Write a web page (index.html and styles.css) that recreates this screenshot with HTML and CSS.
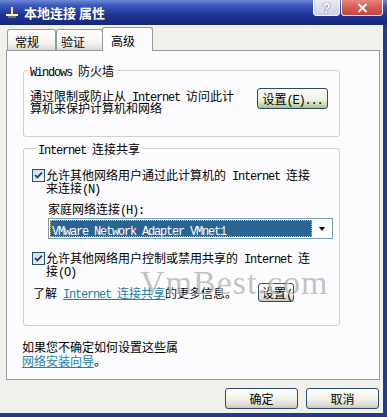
FILE: index.html
```html
<!DOCTYPE html>
<html lang="zh-CN">
<head>
  <meta charset="UTF-8">
  <title>本地连接 属性</title>
  <link rel="stylesheet" href="styles.css">
</head>
<body>
  <div class="window">
    <div class="titlebar">
      <svg class="app-icon" width="14" height="12" viewBox="0 0 14 12">
        <path d="M7 1v7" stroke="#ffe680" stroke-width="2"/>
        <path d="M1 9h12" stroke="#fff6c0" stroke-width="2"/>
        <path d="M3 11h8" stroke="#c9a640" stroke-width="1"/>
      </svg>
      <span class="title">本地连接 属性</span>
      <div class="caption-btns">
        <span class="cap help">?</span>
        <span class="cap close">
          <svg width="11" height="10" viewBox="0 0 11 10"><path d="M1.5 1l8 8M9.5 1l-8 8" stroke="#fff" stroke-width="2"/></svg>
        </span>
      </div>
    </div>

    <div class="client">
      <div class="tabs">
        <div class="tab">常规</div>
        <div class="tab">验证</div>
        <div class="tab active">高级</div>
      </div>

      <div class="panel">
        <fieldset class="group firewall">
          <legend><span class="en">Windows </span>防火墙</legend>
          <div class="row">
            <p class="desc">通过限制或防止从<span class="en"> Internet </span>访问此计<br>算机来保护计算机和网络</p>
            <button class="btn btn-green">设置<span class="en">(E)...</span></button>
          </div>
        </fieldset>

        <fieldset class="group sharing">
          <legend><span class="en">Internet </span>连接共享</legend>
          <div class="check">
            <span class="box"><svg width="11" height="11" viewBox="0 0 11 11"><path d="M2 5l2.3 2.4L9 2.6" fill="none" stroke="#23358c" stroke-width="1.8"/></svg></span>
            <span>允许其他网络用户通过此计算机的<span class="en"> Internet </span>连接<br>来连接<span class="en">(N)</span></span>
          </div>
          <div class="indent">
            <div class="field-label">家庭网络连接<span class="en">(H):</span></div>
            <div class="combo">
              <span class="combo-value"><span class="en">VMware Network Adapter VMnet1</span></span>
              <span class="combo-arrow"></span>
            </div>
          </div>
          <div class="check check-2">
            <span class="box"><svg width="11" height="11" viewBox="0 0 11 11"><path d="M2 5l2.3 2.4L9 2.6" fill="none" stroke="#23358c" stroke-width="1.8"/></svg></span>
            <span>允许其他网络用户控制或禁用共享的<span class="en"> Internet </span>连<br>接<span class="en">(O)</span></span>
          </div>
          <div class="more">
            <span>了解<span class="en"> </span><a href="#"><span class="en">Internet </span>连接共享</a>的更多信息。</span>
            <button class="btn btn-cut">设置<span class="en">(</span></button>
          </div>
        </fieldset>

        <p class="hint">如果您不确定如何设置这些属<br><a href="#">网络安装向导</a>。</p>
      </div>

      <div class="footer">
        <button class="btn">确定</button>
        <button class="btn">取消</button>
      </div>
    </div>

    <div class="watermark">VmBest.com</div>
  </div>
</body>
</html>
```

FILE: styles.css
```css
* {
  box-sizing: border-box;
}
body {
  margin: 0;
  font-family: "Noto Sans CJK SC", sans-serif;
  font-size: 12px;
  line-height: 12px;
  color: #000;
  background: #fff;
}
.en {
  font-family: "Liberation Mono", monospace;
  letter-spacing: -1.2px;
  line-height: 8px;
}
.window {
  position: relative;
  width: 387px;
  height: 417px;
  overflow: hidden;
  background: #f1f0ea;
}

/* title bar */
.titlebar {
  height: 25px;
  display: flex;
  align-items: flex-start;
  color: #fff;
  background: linear-gradient(#7088d6, #3a58bd 22%, #1f3594 60%, #152877);
}
.app-icon {
  margin: 6px 5px 0 5px;
}
.title {
  margin-top: 6px;
  font-size: 13px;
  line-height: 13px;
  font-weight: bold;
}
.caption-btns {
  display: flex;
  gap: 1px;
  margin-left: auto;
  margin-right: 4px;
}
.cap {
  display: flex;
  align-items: center;
  justify-content: center;
  height: 21px;
  margin-top: -5px;
  padding-top: 4px;
  border: 1px solid #f4f4f8;
  border-radius: 3px;
}
.help {
  width: 27px;
  background: linear-gradient(#eef0f6, #cdd4e6);
  color: #fff;
  font: bold 14px "Liberation Sans", sans-serif;
  text-shadow: 0 0 1px #555, 0 0 1px #555;
}
.close {
  width: 42px;
  background: linear-gradient(#f09a92, #d85a55 60%, #c7443c);
}

/* client area */
.client {
  height: 392px;
  border-right: 4px solid #23398f;
  border-bottom: 4px solid #23398f;
}
.tabs {
  display: flex;
  align-items: flex-end;
  height: 25px;
  padding-left: 7px;
}
.tab {
  width: 49px;
  height: 21px;
  padding: 6px 0 0 7px;
  border: 1px solid #919b9c;
  border-bottom: none;
  border-radius: 3px 3px 0 0;
  background: linear-gradient(#fefefe, #f4f4f0 65%, #dcdcd4);
}
.tab + .tab {
  width: 47px;
  padding-left: 4px;
}
.tab.active {
  position: relative;
  z-index: 1;
  width: 51px;
  height: 24px;
  margin-bottom: -1px;
  margin-left: -1px;
  padding: 7px 0 0 8px;
  background: #fcfcfe;
}
.panel {
  width: 374px;
  height: 330px;
  margin-left: 6px;
  padding: 13px 0 0 16px;
  border: 1px solid #919b9c;
  background: #fcfcfe;
}

/* group boxes */
.group {
  width: 317px;
  margin: 0;
  padding: 0;
  border: 1px solid #d0d0bf;
  border-radius: 3px;
}
.group legend {
  margin-left: 4px;
  padding: 0 2px;
  line-height: 13px;
}
.firewall .row {
  display: flex;
  align-items: flex-start;
  padding: 11px 0 22px 6px;
}
.desc {
  width: 227px;
  margin: 2px 0 0;
}
.sharing {
  margin-top: 5px;
  padding: 13px 0 23px 8px;
}
.check {
  display: flex;
  align-items: flex-start;
  line-height: 13px;
}
.box {
  flex: none;
  display: flex;
  align-items: center;
  justify-content: center;
  width: 13px;
  height: 13px;
  margin: 1px 1px 0 0;
  border: 1px solid #1c5180;
  background: linear-gradient(135deg, #d6d9e4, #f6f6f8);
}
.indent {
  margin-top: 9px;
  padding-left: 16px;
}
.combo {
  display: flex;
  align-items: center;
  width: 285px;
  height: 21px;
  margin-top: 3px;
  padding: 1px;
  border: 1px solid #7f9db9;
  background: #fff;
}
.combo-value {
  flex: 1;
  height: 17px;
  padding: 4px 0 0 2px;
  color: #fff;
  background: #2c6491;
  outline: 1px dotted #e8c060;
  outline-offset: -1px;
}
.combo-arrow {
  width: 19px;
  height: 17px;
  position: relative;
}
.combo-arrow::after {
  content: "";
  position: absolute;
  left: 7px;
  top: 7px;
  border-left: 3.5px solid transparent;
  border-right: 3.5px solid transparent;
  border-top: 4px solid #000;
}
.check-2 {
  margin-top: 12px;
}
.more {
  display: flex;
  align-items: center;
  margin-top: 6px;
  padding-left: 1px;
}
a {
  color: #2481a8;
  text-decoration: underline;
}

/* buttons */
.btn {
  font: inherit;
  height: 21px;
  padding: 0;
  color: #000;
  border: 1px solid #2c4c6e;
  border-radius: 3px;
  background: linear-gradient(#fdfdfb, #f2f2ec 50%, #dedcd2 85%, #c9c5b8);
}
.btn-green {
  width: 71px;
  background: linear-gradient(#fbfcf6, #eff3e2 55%, #cddcb4 80%, #a8c082);
}
.btn-cut {
  width: 36px;
  height: 19px;
  margin-left: 21px;
  padding-left: 3px;
  text-align: left;
  white-space: nowrap;
}
.hint {
  margin: 14px 0 0 -1px;
  line-height: 14px;
}
.footer {
  display: flex;
  justify-content: flex-end;
  gap: 8px;
  padding: 8px 4px 0 0;
}
.footer .btn {
  width: 73px;
}

/* site watermark laid over the dialog */
.watermark {
  position: absolute;
  left: 140px;
  top: 266px;
  font: 34px/34px "Liberation Serif", serif;
  letter-spacing: 1px;
  color: rgba(120, 120, 120, 0.45);
  text-shadow: 1px 1px 1px rgba(255, 255, 255, 0.7);
  pointer-events: none;
}
```
